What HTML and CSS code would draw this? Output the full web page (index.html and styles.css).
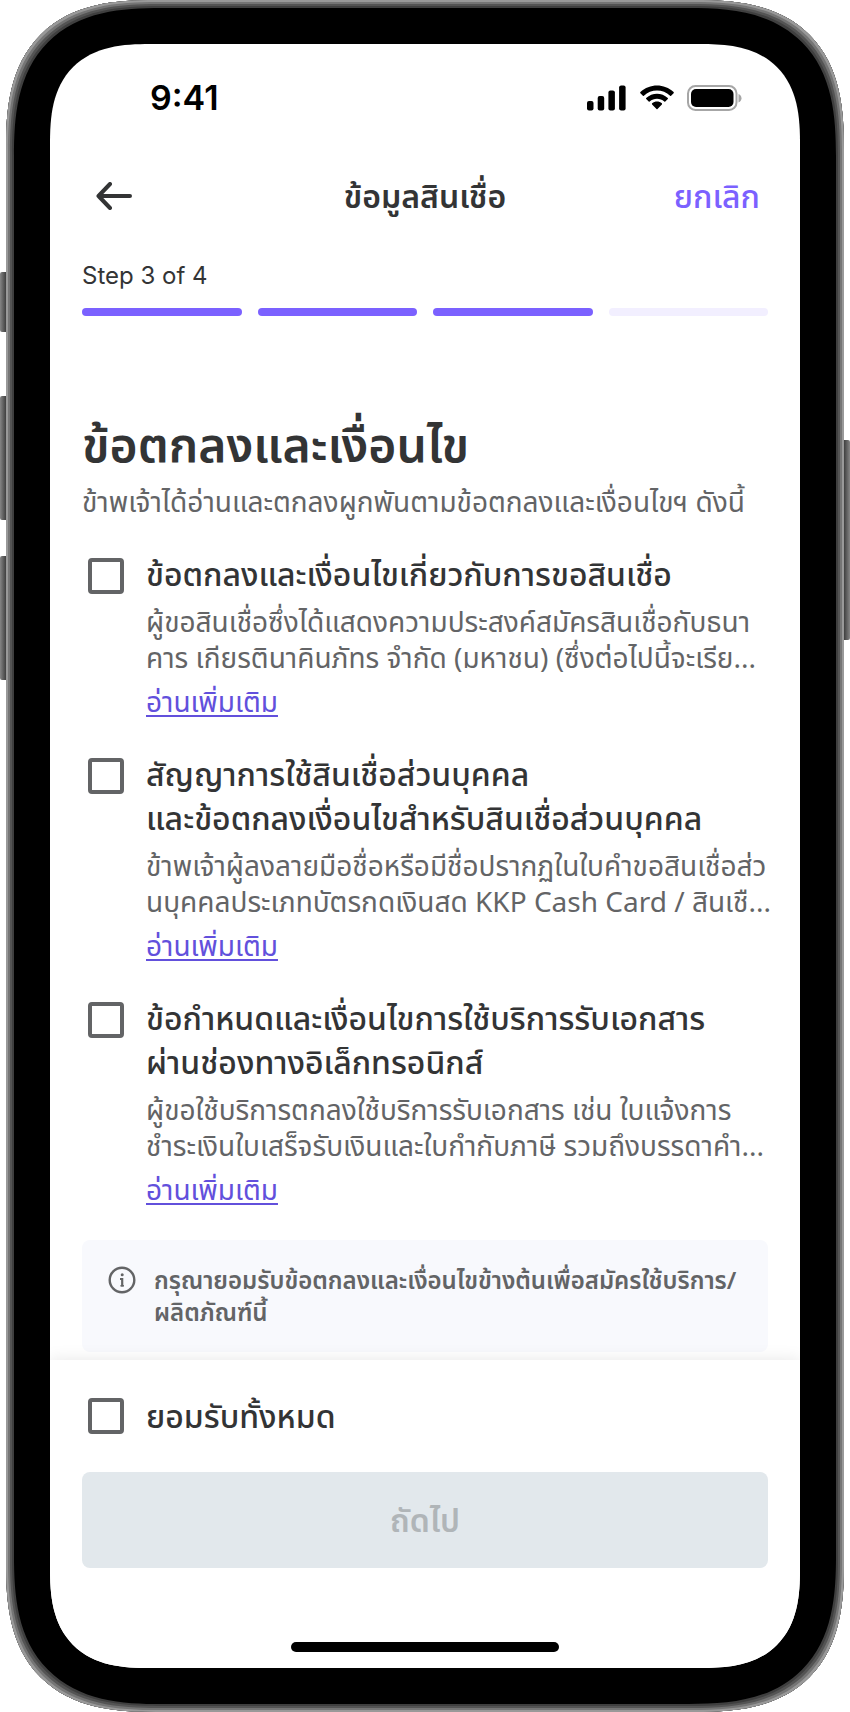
FILE: index.html
```html
<!DOCTYPE html>
<html lang="th">
<head>
    <meta charset="UTF-8">
    <meta name="viewport" content="width=device-width, initial-scale=1.0">
    <title>ข้อมูลสินเชื่อ</title>
    <link rel="stylesheet" href="styles.css">
</head>
<body>
    <div class="phone">
        <span class="side-button side-mute"></span>
        <span class="side-button side-up"></span>
        <span class="side-button side-down"></span>
        <span class="side-button side-power"></span>

        <div class="screen">
            <div class="status-bar">
                <span class="time">9:41</span>
                <div class="status-icons">
                    <svg width="40" height="26" viewBox="0 0 40 26">
                        <rect x="0" y="16" width="6.5" height="9.5" rx="2"/>
                        <rect x="10.7" y="11" width="6.5" height="14.5" rx="2"/>
                        <rect x="21.4" y="5.5" width="6.5" height="20" rx="2"/>
                        <rect x="32.1" y="0.5" width="6.5" height="25" rx="2"/>
                    </svg>
                    <svg width="36" height="26" viewBox="0 0 36 26">
                        <path d="M18 5.6c4.9 0 9.6 1.9 13.1 5.2.3.3.7.3 1 0l2.5-2.6c.3-.3.3-.8 0-1.1C25.3-1.8 10.7-1.8 1.4 7.1c-.3.3-.3.8 0 1.1l2.5 2.6c.3.3.7.3 1 0C8.4 7.5 13.1 5.6 18 5.6z"/>
                        <path d="M18 13.8c2.7 0 5.3 1 7.3 2.8.3.3.7.2 1 0l2.5-2.6c.3-.3.3-.8 0-1.1-6.1-5.7-15.5-5.7-21.6 0-.3.3-.3.8 0 1.1l2.5 2.6c.3.2.7.3 1 0 2-1.8 4.6-2.8 7.3-2.8z"/>
                        <path d="M22.9 19.4c.3-.3.3-.8 0-1.1-2.8-2.4-7-2.4-9.8 0-.3.3-.3.8 0 1.1l4.4 4.6c.3.3.7.3 1 0z"/>
                    </svg>
                    <svg width="55" height="26" viewBox="0 0 55 26">
                        <rect x="1" y="1" width="48.5" height="24" rx="7.5" fill="none" stroke="#a6a6a6" stroke-width="2"/>
                        <path d="M51.5 9v8.5c2-.8 3-2.300 3-4.200s-1-3.500-3-4.300z" fill="#a6a6a6"/>
                        <rect x="4" y="4" width="42.5" height="18" rx="5"/>
                    </svg>
                </div>
            </div>

            <header class="nav">
                <button type="button" class="back" aria-label="กลับ">
                    <svg width="36" height="28" viewBox="0 0 36 28" fill="none" stroke="currentColor" stroke-width="4" stroke-linecap="round" stroke-linejoin="round">
                        <path d="M34 14H2.5M14 2 2.5 14 14 26"/>
                    </svg>
                </button>
                <h2 class="nav-title">ข้อมูลสินเชื่อ</h2>
                <button type="button" class="cancel">ยกเลิก</button>
            </header>

            <div class="progress">
                <p class="step">Step 3 of 4</p>
                <div class="bars">
                    <span class="bar done"></span>
                    <span class="bar done"></span>
                    <span class="bar done"></span>
                    <span class="bar"></span>
                </div>
            </div>

            <main class="content">
                <h1>ข้อตกลงและเงื่อนไข</h1>
                <p class="lead">ข้าพเจ้าได้อ่านและตกลงผูกพันตามข้อตกลงและเงื่อนไขฯ ดังนี้</p>

                <div class="terms">
                    <div class="term">
                        <input type="checkbox" id="term1" class="checkbox">
                        <div class="term-body">
                            <label for="term1" class="term-title">ข้อตกลงและเงื่อนไขเกี่ยวกับการขอสินเชื่อ</label>
                            <p class="term-text">ผู้ขอสินเชื่อซึ่งได้แสดงความประสงค์สมัครสินเชื่อกับธนา<br>คาร เกียรตินาคินภัทร จำกัด (มหาชน) (ซึ่งต่อไปนี้จะเรีย...</p>
                            <a href="#" class="more">อ่านเพิ่มเติม</a>
                        </div>
                    </div>

                    <div class="term">
                        <input type="checkbox" id="term2" class="checkbox">
                        <div class="term-body">
                            <label for="term2" class="term-title">สัญญาการใช้สินเชื่อส่วนบุคคล<br>และข้อตกลงเงื่อนไขสำหรับสินเชื่อส่วนบุคคล</label>
                            <p class="term-text">ข้าพเจ้าผู้ลงลายมือชื่อหรือมีชื่อปรากฏในใบคำขอสินเชื่อส่ว<br>นบุคคลประเภทบัตรกดเงินสด KKP Cash Card / สินเชื...</p>
                            <a href="#" class="more">อ่านเพิ่มเติม</a>
                        </div>
                    </div>

                    <div class="term">
                        <input type="checkbox" id="term3" class="checkbox">
                        <div class="term-body">
                            <label for="term3" class="term-title">ข้อกำหนดและเงื่อนไขการใช้บริการรับเอกสาร<br>ผ่านช่องทางอิเล็กทรอนิกส์</label>
                            <p class="term-text">ผู้ขอใช้บริการตกลงใช้บริการรับเอกสาร เช่น ใบแจ้งการ<br>ชำระเงินใบเสร็จรับเงินและใบกำกับภาษี รวมถึงบรรดาคำ...</p>
                            <a href="#" class="more">อ่านเพิ่มเติม</a>
                        </div>
                    </div>
                </div>

                <div class="notice">
                    <svg width="28" height="28" viewBox="0 0 28 28" fill="none" stroke="currentColor" stroke-width="2.4">
                        <circle cx="14" cy="14" r="12.3"/>
                        <circle cx="14.2" cy="8.8" r="1.5" fill="currentColor" stroke="none"/>
                        <path d="M12 13h2.2v7.4" stroke-width="2.2"/>
                        <path d="M12.4 19.8h3.6" stroke-width="1.4"/>
                    </svg>
                    <p>กรุณายอมรับข้อตกลงและเงื่อนไขข้างต้นเพื่อสมัครใช้บริการ/<br>ผลิตภัณฑ์นี้</p>
                </div>
            </main>

            <footer class="footer">
                <div class="accept-all">
                    <input type="checkbox" id="acceptAll" class="checkbox">
                    <label for="acceptAll" class="accept-label">ยอมรับทั้งหมด</label>
                </div>
                <button type="submit" class="next" disabled>ถัดไป</button>
                <div class="home-indicator"></div>
            </footer>
        </div>
    </div>
</body>
</html>
```

FILE: styles.css
```css
:root {
    --primary: #7b61ff;
    --primary-light: #f2efff;
    --link: #6250dc;
    --text: #333435;
    --text-secondary: #636466;
    --disabled-bg: #e2e8ec;
    --disabled-text: #b0b5b8;
    --notice-bg: #f8f9fd;
    --font-thai: "Noto Sans Thai", "Noto Sans", sans-serif;
    --font-latin: Inter, sans-serif;
}

* {
    box-sizing: border-box;
    margin: 0;
    padding: 0;
}

body {
    background: #fff;
    color: var(--text);
    font-family: var(--font-thai);
    padding: 0 6px;
}

button {
    background: none;
    border: none;
    color: inherit;
    font-family: inherit;
    cursor: pointer;
}

/* device frame */
.phone {
    position: relative;
    max-width: 838px;
    margin: 0 auto;
    padding: 44px;
    background: #000;
    border-radius: 122px;
    box-shadow:
        inset 0 0 0 2px #999,
        inset 0 0 0 4px #757575,
        inset 0 0 0 6px #545454,
        inset 0 0 0 8px #3f3f3f;
}

.side-button {
    position: absolute;
    left: -6px;
    width: 6px;
    height: 124px;
    background: linear-gradient(to right, #858585, #3f3f3f);
    border-radius: 2px 0 0 2px;
}

.side-mute {
    top: 272px;
    height: 60px;
}

.side-up {
    top: 396px;
}

.side-down {
    top: 556px;
}

.side-power {
    top: 440px;
    left: auto;
    right: -6px;
    height: 200px;
    background: linear-gradient(to left, #858585, #3f3f3f);
    border-radius: 0 2px 2px 0;
}

.screen {
    background: #fff;
    border-radius: 80px;
    overflow: hidden;
}

/* smoother corners where the browser can draw them */
@supports (corner-shape: superellipse(1.4)) {
    .phone {
        border-radius: 150px;
        corner-shape: superellipse(1.4);
    }

    .screen {
        border-radius: 100px;
        corner-shape: superellipse(1.4);
    }
}

.status-bar {
    display: flex;
    align-items: center;
    justify-content: space-between;
    height: 108px;
    padding: 0 58px 0 100px;
    color: #000;
}

.time {
    font-family: var(--font-latin);
    font-size: 34px;
    font-weight: 600;
    line-height: 40px;
}

.status-icons {
    display: flex;
    align-items: center;
    gap: 12px;
}

.nav {
    display: grid;
    grid-template-columns: 1fr auto 1fr;
    align-items: center;
    height: 88px;
    padding: 0 40px;
}

.back {
    display: flex;
    justify-self: start;
    padding-left: 6px;
}

.nav-title,
.cancel {
    padding-top: 4px;
    font-size: 32px;
    line-height: 44px;
}

.nav-title {
    font-weight: 600;
}

.cancel {
    justify-self: end;
    color: var(--primary);
    font-weight: 500;
}

.progress {
    padding: 20px 32px 0;
}

.step {
    font-family: var(--font-latin);
    font-size: 24px;
    line-height: 32px;
    margin-bottom: 16px;
}

.bars {
    display: flex;
    gap: 16px;
}

.bar {
    flex: 1;
    height: 8px;
    border-radius: 4px;
    background: var(--primary-light);
}

.bar.done {
    background: var(--primary);
}

.content {
    padding: 96px 32px 8px;
}

h1 {
    font-size: 48px;
    font-weight: 600;
    line-height: 72px;
}

.lead {
    color: var(--text-secondary);
    font-size: 28px;
    line-height: 40px;
    white-space: nowrap;
}

.terms {
    display: flex;
    flex-direction: column;
    gap: 32px;
    margin: 30px 0;
}

.term {
    display: flex;
    gap: 22px;
    padding-left: 6px;
}

.checkbox {
    appearance: none;
    flex: none;
    width: 36px;
    height: 36px;
    margin-top: 4px;
    border: 4px solid var(--text-secondary);
    border-radius: 4px;
}

.checkbox:checked {
    background: var(--primary);
    border-color: var(--primary);
}

.term-body {
    min-width: 0;
    white-space: nowrap;
}

.term-title {
    display: block;
    font-size: 32px;
    font-weight: 500;
    line-height: 44px;
}

.term-text {
    color: var(--text-secondary);
    font-size: 28px;
    line-height: 36px;
    margin: 8px 0;
}

.more {
    display: block;
    width: max-content;
    color: var(--link);
    font-size: 28px;
    line-height: 36px;
    text-decoration-thickness: 2px;
    text-underline-offset: 3px;
}

.notice {
    display: flex;
    gap: 18px;
    padding: 26px 26px 22px;
    background: var(--notice-bg);
    border-radius: 8px;
    color: var(--text-secondary);
    font-size: 24px;
    font-weight: 600;
    line-height: 32px;
    white-space: nowrap;
}

.notice svg {
    flex: none;
}

.footer {
    position: relative;
    padding: 34px 32px 16px;
    background: #fff;
    box-shadow: 0 0 16px rgba(0, 0, 0, 0.1);
}

.accept-all {
    display: flex;
    gap: 22px;
    padding-left: 6px;
    margin-bottom: 30px;
}

.accept-label {
    font-size: 32px;
    font-weight: 500;
    line-height: 48px;
}

.next {
    display: block;
    width: 100%;
    height: 96px;
    padding-top: 4px;
    background: var(--disabled-bg);
    border-radius: 8px;
    color: var(--disabled-text);
    font-size: 32px;
    font-weight: 600;
}

.home-indicator {
    width: 268px;
    height: 10px;
    margin: 74px auto 0;
    background: #000;
    border-radius: 5px;
}
```
